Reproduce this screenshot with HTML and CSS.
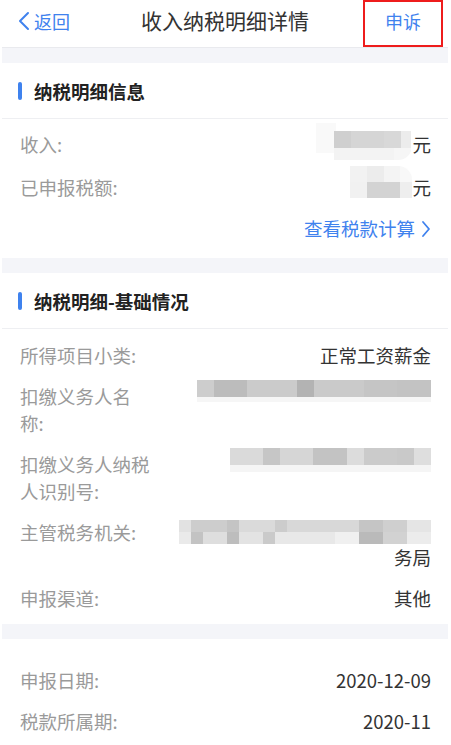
FILE: index.html
```html
<!DOCTYPE html>
<html lang="zh-CN">
<head>
<meta charset="utf-8">
<title>收入纳税明细详情</title>
<link rel="stylesheet" href="styles.css">
</head>
<body>
<div class="page">
  <header class="nav">
    <a class="nav-back">
      <svg class="chev-left" viewBox="0 0 12 20" width="12" height="20"><path d="M10 2 L2 10 L10 18" fill="none" stroke="#3f82ee" stroke-width="2" stroke-linecap="round" stroke-linejoin="round"/></svg>
      <span>返回</span>
    </a>
    <h1 class="nav-title">收入纳税明细详情</h1>
    <div class="nav-right"><a class="nav-action">申诉</a></div>
  </header>

  <div class="band"></div>

  <section class="card">
    <div class="card-head"><span class="mark"></span><span>纳税明细信息</span></div>
    <div class="list list-1">
      <div class="row">
        <div class="label">收入:</div>
        <div class="value"><span class="mosaic mosaic-income"></span>元</div>
      </div>
      <div class="row">
        <div class="label">已申报税额:</div>
        <div class="value"><span class="mosaic mosaic-tax"></span>元</div>
      </div>
      <div class="row row-link">
        <a class="link">查看税款计算<svg class="chev-right" viewBox="0 0 10 18" width="10" height="18"><path d="M2 2 L8 9 L2 16" fill="none" stroke="#3f82ee" stroke-width="1.8" stroke-linecap="round" stroke-linejoin="round"/></svg></a>
      </div>
    </div>
  </section>

  <div class="band"></div>

  <section class="card">
    <div class="card-head"><span class="mark"></span><span>纳税明细-基础情况</span></div>
    <div class="list list-2">
      <div class="row">
        <div class="label">所得项目小类:</div>
        <div class="value">正常工资薪金</div>
      </div>
      <div class="row">
        <div class="label">扣缴义务人名称:</div>
        <div class="value"><span class="mosaic mosaic-name"></span></div>
      </div>
      <div class="row">
        <div class="label">扣缴义务人纳税人识别号:</div>
        <div class="value"><span class="mosaic mosaic-id"></span></div>
      </div>
      <div class="row">
        <div class="label">主管税务机关:</div>
        <div class="value value-stack"><span class="mosaic mosaic-office"></span><span>务局</span></div>
      </div>
      <div class="row">
        <div class="label">申报渠道:</div>
        <div class="value">其他</div>
      </div>
    </div>
  </section>

  <div class="band"></div>

  <section class="card">
    <div class="list list-3">
      <div class="row">
        <div class="label">申报日期:</div>
        <div class="value">2020-12-09</div>
      </div>
      <div class="row">
        <div class="label">税款所属期:</div>
        <div class="value">2020-11</div>
      </div>
    </div>
  </section>
</div>
</body>
</html>
```

FILE: styles.css
```css
* { box-sizing: border-box; }
html, body { margin: 0; padding: 0; background: #fff; }
body {
  font-family: "Noto Sans CJK SC", "Noto Sans", "Liberation Sans", sans-serif;
  color: #333;
  overflow: hidden;
}
.page { width: 451px; min-height: 745px; padding: 0 3px 0 2px; }

.nav {
  height: 48px;
  display: grid;
  grid-template-columns: 1fr auto 1fr;
  align-items: start;
  border-bottom: 1px solid #e9eaee;
}
.nav-back {
  display: flex;
  align-items: center;
  gap: 4px;
  padding-left: 16px;
  margin-top: 8px;
  color: #3f82ee;
  font-size: 18px;
  line-height: 26px;
}
.chev-left { display: block; }
.nav-title {
  margin: 6px 0 0;
  font-size: 21px;
  font-weight: 400;
  line-height: 28px;
  color: #333;
}
.nav-right { display: flex; justify-content: flex-end; padding-right: 5px; }
.nav-action {
  width: 80px;
  height: 47px;
  border: 2px solid #ee1c1c;
  color: #3f82ee;
  font-size: 18px;
  line-height: 26px;
  padding-top: 6px;
  text-align: center;
}

.band { height: 15px; background: #f4f5f9; }

.card { background: #fff; }
.card-head {
  height: 56px;
  display: flex;
  align-items: center;
  gap: 12px;
  padding-left: 16px;
  border-bottom: 1px solid #eeeff2;
  font-size: 18.5px;
  font-weight: 700;
  color: #222;
}
.mark {
  width: 4px;
  height: 18px;
  border-radius: 2px;
  background: #3f82ee;
}

.list { padding: 0 17px 0 18px; }
.list-1 { padding-top: 5px; padding-bottom: 9px; }
.list-2 { padding-top: 6px; padding-bottom: 5px; }
.list-3 { padding-top: 21px; }

.row {
  display: flex;
  align-items: flex-start;
  padding: 7px 0;
  font-size: 18.5px;
  line-height: 27px;
}
.label {
  width: 133px;
  flex: none;
  color: #9a9a9a;
}
.value {
  flex: 1;
  display: flex;
  justify-content: flex-end;
  align-items: flex-start;
  color: #333;
  text-align: right;
}
.value-stack { flex-direction: column; align-items: flex-end; }

.row-link { justify-content: flex-end; }
.link {
  display: flex;
  align-items: center;
  gap: 6px;
  color: #3f82ee;
}
.chev-right { display: block; }

.mosaic { display: block; }
.mosaic-income {
  width: 96px;
  height: 37px;
  margin-top: -8px;
  background:
    linear-gradient(to right, #cfcfcf 0 17px, #d5d5d5 17px 50px, #d8d8d8 50px 67px, #ececec 67px 77px, transparent 77px) 18px 8px / 78px 17px no-repeat,
    linear-gradient(to right, #f3f3f3 0 60px, #f6f6f6 60px 77px, transparent 77px) 18px 25px / 78px 12px no-repeat,
    linear-gradient(#f9f9f9, #f9f9f9) 0 0 / 20px 30px no-repeat;
  border-radius: 0 0 14px 0;
}
.mosaic-tax {
  width: 62px;
  height: 32px;
  margin-top: -8px;
  background:
    linear-gradient(to right, #f2f2f2 0 17px, #ececec 17px 34px, #f4f4f4 34px 50px, #f8f8f8 50px) 0 0 / 62px 16px no-repeat,
    linear-gradient(to right, #f1f1f1 0 17px, #d3d3d3 17px 50px, #eeeeee 50px) 0 16px / 62px 16px no-repeat;
  border-radius: 0 14px 0 0;
}
.mosaic-name {
  width: 234px;
  height: 24px;
  margin-top: -3px;
  background:
    linear-gradient(to right, #cdcdcd 0 17px, #bcbcbc 17px 50px, #cbcbcb 50px 100px, #b3b3b3 100px 117px, #cacaca 117px 167px, #c5c5c5 167px 200px, #c3c3c3 200px) 0 0 / 234px 17px no-repeat,
    linear-gradient(#f6f6f6, #f6f6f6) 0 17px / 234px 5px no-repeat;
}
.mosaic-id {
  width: 201px;
  height: 24px;
  margin-top: -3px;
  background:
    linear-gradient(to right, #dadada 0 33px, #c6c6c6 33px 50px, #d6d6d6 50px 83px, #c3c3c3 83px 117px, #dcdcdc 117px 134px, #cbcbcb 134px 167px, #c9c9c9 167px 184px, #dedede 184px) 0 0 / 201px 17px no-repeat,
    linear-gradient(#f5f5f5, #f5f5f5) 0 17px / 201px 7px no-repeat;
}
.mosaic-office {
  width: 252px;
  height: 24px;
  margin-top: 1px;
  background:
    linear-gradient(to right, #e2e2e2 0 12px, #cdcdcd 12px 48px, #c4c4c4 48px 60px, #dadada 60px 96px, #cccccc 96px 108px, #d8d8d8 108px 180px, #c5c5c5 180px 204px, #cfcfcf 204px 228px, #e5e5e5 228px) 0 0 / 252px 12px no-repeat,
    linear-gradient(to right, #eaeaea 0 12px, #c3c3c3 12px 24px, #dedede 24px 48px, #bdbdbd 48px 60px, #e3e3e3 60px 84px, #cacaca 84px 96px, #e8e8e8 96px 156px, #f0f0f0 156px 180px, #bababa 180px 204px, #d2d2d2 204px 228px, #ececec 228px) 0 12px / 252px 12px no-repeat;
}
```
